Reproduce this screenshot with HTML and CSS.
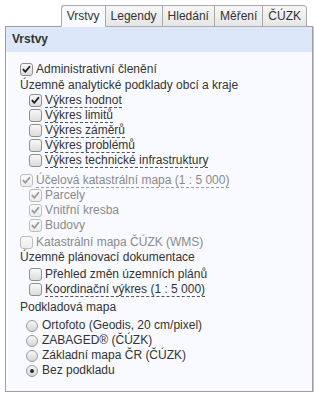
FILE: index.html
```html
<!DOCTYPE html>
<html lang="cs">
<head>
<meta charset="utf-8">
<title>Vrstvy</title>
<link rel="stylesheet" href="styles.css">
</head>
<body>
<div class="wrap">
  <div class="tabs">
    <div class="tab active">Vrstvy</div>
    <div class="tab">Legendy</div>
    <div class="tab">Hledání</div>
    <div class="tab">Měření</div>
    <div class="tab last">ČÚZK</div>
  </div>
  <div class="panel">
    <div class="head">Vrstvy</div>
    <div class="content">
      <div class="row top gap-admin"><span class="cb on"><svg viewBox="0 0 13 13"><path d="M2.8 6.6 L5.2 9.2 L10 3.2"/></svg></span><span class="txt">Administrativní členění</span></div>
      <div class="row label">Územně analytické podklady obcí a kraje</div>
      <div class="row sub"><span class="cb on"><svg viewBox="0 0 13 13"><path d="M2.8 6.6 L5.2 9.2 L10 3.2"/></svg></span><span class="txt tip">Výkres hodnot</span></div>
      <div class="row sub"><span class="cb"></span><span class="txt tip">Výkres limitů</span></div>
      <div class="row sub"><span class="cb"></span><span class="txt tip">Výkres záměrů</span></div>
      <div class="row sub"><span class="cb"></span><span class="txt tip">Výkres problémů</span></div>
      <div class="row sub"><span class="cb"></span><span class="txt tip">Výkres technické infrastruktury</span></div>
      <div class="row top dis gap-sec"><span class="cb on"><svg viewBox="0 0 13 13"><path d="M2.8 6.6 L5.2 9.2 L10 3.2"/></svg></span><span class="txt tip">Účelová katastrální mapa (1 : 5 000)</span></div>
      <div class="row sub dis"><span class="cb on"><svg viewBox="0 0 13 13"><path d="M2.8 6.6 L5.2 9.2 L10 3.2"/></svg></span><span class="txt">Parcely</span></div>
      <div class="row sub dis"><span class="cb on"><svg viewBox="0 0 13 13"><path d="M2.8 6.6 L5.2 9.2 L10 3.2"/></svg></span><span class="txt">Vnitřní kresba</span></div>
      <div class="row sub dis"><span class="cb on"><svg viewBox="0 0 13 13"><path d="M2.8 6.6 L5.2 9.2 L10 3.2"/></svg></span><span class="txt">Budovy</span></div>
      <div class="row top dis gap-small"><span class="cb"></span><span class="txt">Katastrální mapa ČÚZK (WMS)</span></div>
      <div class="row label">Územně plánovací dokumentace</div>
      <div class="row sub gap-small"><span class="cb"></span><span class="txt">Přehled změn územních plánů</span></div>
      <div class="row sub"><span class="cb"></span><span class="txt tip">Koordinační výkres (1 : 5 000)</span></div>
      <div class="row label gap-base">Podkladová mapa</div>
      <div class="row radio gap-base"><span class="rb"></span><span class="txt">Ortofoto (Geodis, 20 cm/pixel)</span></div>
      <div class="row radio"><span class="rb"></span><span class="txt">ZABAGED® (ČÚZK)</span></div>
      <div class="row radio"><span class="rb"></span><span class="txt">Základní mapa ČR (ČÚZK)</span></div>
      <div class="row radio"><span class="rb sel"></span><span class="txt">Bez podkladu</span></div>
    </div>
  </div>
</div>
</body>
</html>
```

FILE: styles.css
```css
html, body {
  margin: 0;
  padding: 0;
  background: #ffffff;
}
body {
  font-family: "Liberation Sans", Arial, sans-serif;
  font-size: 12px;
  color: #333333;
}
.wrap {
  padding: 5px 0 0 5px;
  width: 308px;
}
.tabs {
  display: flex;
  justify-content: flex-end;
  padding-right: 6px;
  height: 22px;
  position: relative;
  z-index: 2;
  margin-bottom: -1px;
}
.tab {
  box-sizing: border-box;
  height: 22px;
  line-height: 21px;
  padding: 0 5px;
  border: 1px solid #a9a9a9;
  border-right: none;
  border-bottom: 1px solid #a9a9a9;
  background: linear-gradient(#f7f7f7, #e6e6e6);
  color: #333333;
  white-space: nowrap;
}
.tab.last {
  border-right: 1px solid #a9a9a9;
  border-top-right-radius: 3px;
}
.tab.active {
  background: #f8faff;
  border-bottom-color: #f8faff;
  border-top-left-radius: 3px;
}
.panel {
  box-sizing: border-box;
  width: 308px;
  height: 366px;
  border: 1px solid #a0a0a0;
  background: #f8faff;
  box-shadow: 1px 1px 2px rgba(0, 0, 0, 0.35);
}
.head {
  height: 25px;
  line-height: 25px;
  padding-left: 6px;
  background: #dde7fa;
  font-weight: bold;
  color: #333333;
}
.content {
  padding: 10px 0 0 14px;
}
.row {
  display: flex;
  align-items: center;
  height: 15px;
  line-height: 15px;
  white-space: nowrap;
}
.row.sub {
  padding-left: 9px;
}
.row.radio {
  padding-left: 6px;
}
.gap-admin { margin-bottom: 1px; }
.gap-sec { margin-top: 5px; }
.gap-small { margin-top: 2px; }
.gap-base { margin-top: 3px; }
.txt {
  display: inline-block;
}
.tip {
  line-height: 13px;
  border-bottom: 1px dashed #555555;
  margin-top: 1px;
}
.dis .txt {
  color: #8a8a8a;
}
.dis .tip {
  border-bottom-color: #9a9a9a;
}
.cb {
  box-sizing: border-box;
  width: 13px;
  height: 13px;
  margin-right: 3px;
  border: 1px solid #8f8f8f;
  border-radius: 3px;
  background: linear-gradient(#f8f8f8, #dcdcdc);
  flex: none;
  display: flex;
}
.cb svg {
  width: 11px;
  height: 11px;
}
.cb svg path {
  fill: none;
  stroke: #1e1e1e;
  stroke-width: 2.2;
  stroke-linecap: round;
  stroke-linejoin: round;
}
.dis .cb {
  border-color: #bdbdbd;
  background: linear-gradient(#fafafa, #ececec);
}
.dis .cb svg path {
  stroke: #9a9a9a;
}
.rb {
  box-sizing: border-box;
  width: 12px;
  height: 12px;
  margin-right: 4px;
  border: 1px solid #9c9c9c;
  border-radius: 50%;
  background: linear-gradient(#f6f6f6, #d6d6d6);
  flex: none;
  display: flex;
  align-items: center;
  justify-content: center;
}
.rb.sel::after {
  content: "";
  width: 4px;
  height: 4px;
  border-radius: 50%;
  background: #2a2a2a;
}
```
